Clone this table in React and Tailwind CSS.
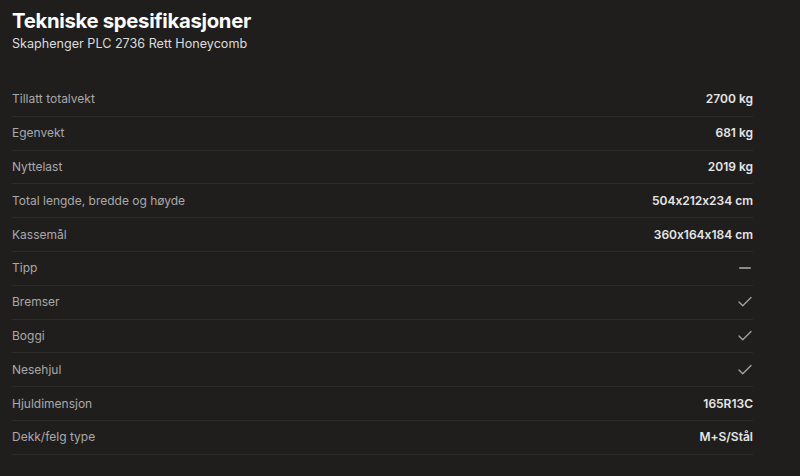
import { Check, Minus } from 'lucide-react'

const rows = [
  { label: 'Tillatt totalvekt', value: '2700 kg' },
  { label: 'Egenvekt', value: '681 kg' },
  { label: 'Nyttelast', value: '2019 kg' },
  { label: 'Total lengde, bredde og høyde', value: '504x212x234 cm' },
  { label: 'Kassemål', value: '360x164x184 cm' },
  { label: 'Tipp', icon: 'minus' },
  { label: 'Bremser', icon: 'check' },
  { label: 'Boggi', icon: 'check' },
  { label: 'Nesehjul', icon: 'check' },
  { label: 'Hjuldimensjon', value: '165R13C' },
  { label: 'Dekk/felg type', value: 'M+S/Stål' },
]

export default function App() {
  return (
    <div className="w-[800px] h-[476px] bg-[#1f1e1d] overflow-hidden [font-feature-settings:'calt'_0]" style={{ fontFamily: 'Inter, "Liberation Sans", sans-serif' }}>
      <div className="pl-3 pr-[47px] pt-[7px]">
        <h1 className="text-[20.3px] leading-[28px] font-bold text-white tracking-[-0.3px]">Tekniske spesifikasjoner</h1>
        <p className="text-[12.6px] leading-[18px] text-[#dcdcdc]">Skaphenger PLC 2736 Rett Honeycomb</p>

        {/* tabell */}
        <div className="mt-[30px]">
          {rows.map((r) => (
            <div key={r.label} className="h-[33.8px] flex items-center justify-between border-b border-[#2c2b2a]">
              <span className="text-[12px] text-[#a9a9a9]">{r.label}</span>
              {r.value && <span className="text-[12px] font-semibold text-[#e6e6e6]">{r.value}</span>}
              {r.icon === 'check' && <Check size={18} strokeWidth={1.8} className="text-[#a3a3a3] -mr-[1px]" />}
              {r.icon === 'minus' && <Minus size={18} strokeWidth={2} className="text-[#b0b0b0] -mr-[1px]" />}
            </div>
          ))}
        </div>
      </div>
    </div>
  )
}
